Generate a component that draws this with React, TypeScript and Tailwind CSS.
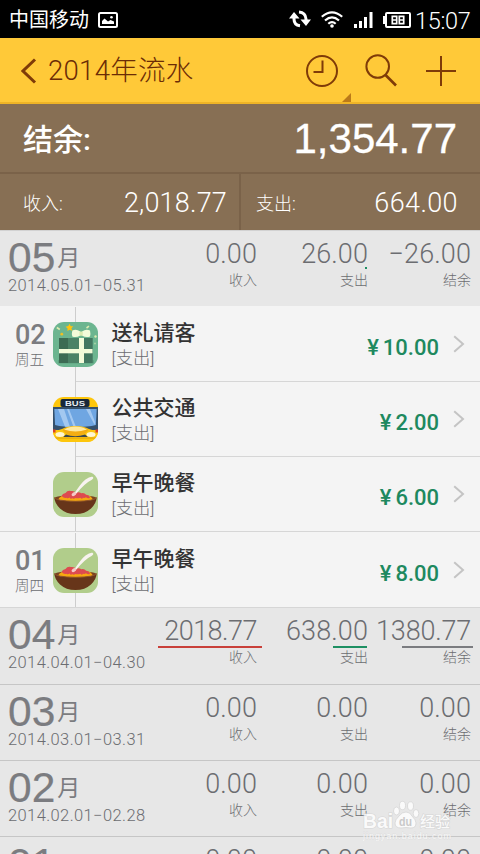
import React from "react";

const CJK = "font-['Roboto','Noto_Sans_CJK_SC',sans-serif]";

function GiftIcon() {
  return (
    <svg width="45" height="45" viewBox="0 0 45 45" className="block">
      <rect width="45" height="45" rx="11" fill="#6cb590" />
      <rect x="5" y="38" width="36" height="3.5" rx="1" fill="#5da37f" />
      <rect x="6" y="16" width="33.5" height="25" fill="#4b8266" />
      <rect x="6" y="16" width="9" height="25" fill="#3c6b53" />
      <rect x="31" y="16" width="8.5" height="25" fill="#437760" />
      <rect x="6" y="27" width="33.5" height="4.3" fill="#f3fbd9" />
      <rect x="26" y="16" width="5" height="25" fill="#f3fbd9" />
      <path d="M19.3 8.5q4-2 8 1v4q-4 2.500-8 1q-.8-3 0-6zM37 8.500q-4-2-8 1v4q4 2.500 8 1q.8-3 0-6z" fill="#f3fbd9" />
      <rect x="26.500" y="9.500" width="3.300" height="4.300" rx="1" fill="#dcebb0" />
      <path d="M16.500 1.800l1.200 2.400 2.600.1-1.900 1.900.8 2.600-2.500-1.100-2.300 1.400.2-2.700-2-1.700 2.700-.6z" fill="#ffc40d" />
      <circle cx="8.800" cy="12.200" r="1.400" fill="#f0bf22" />
      <path d="M3.800 5.500l3 2M33.500 6l2.500-1.800" stroke="#dcebb0" strokeWidth="1.600" />
      <circle cx="42.500" cy="14.500" r="1.200" fill="#dcebb0" />
      <circle cx="42" cy="21.500" r=".9" fill="#aed6a8" />
    </svg>
  );
}

function BusIcon() {
  return (
    <svg width="45" height="45" viewBox="0 0 45 45" className="block">
      <defs>
        <clipPath id="bus"><rect width="45" height="45" rx="11" /></clipPath>
      </defs>
      <g clipPath="url(#bus)">
        <rect width="45" height="45" fill="#fdc60c" />
        <rect y="10" width="45" height="23" fill="#35506b" />
        <path d="M1.300 12h42.400l-.8 16q-8 2-20.400 2t-20.400-2z" fill="#6fa6e2" />
        <path d="M5 12h6l6 18-5-.3zM14 12h2l7 18h-2.500zM33 12h4l5 13-.3 3z" fill="#a3c8f0" />
        <path d="M0 33q4 1 9-1Q14 29 22.500 29T36 32Q41 34 45 33v12H0z" fill="#fdc60c" />
        <path d="M9.500 33Q14 29.500 22.500 29.500T35.500 33Q31 39 22.500 39T9.500 33z" fill="#f4ad12" />
        <path d="M11 32.500Q16 29.500 22.500 29.500T34 32.500Q28 34.500 22.500 34.500T11 32.500z" fill="#ffe9a0" />
        <path d="M13 37.500q9 3.500 19 0l3 2.500H10z" fill="#3a4650" />
        <rect x="7.500" y="2" width="29" height="8" rx="2" fill="#18283a" />
        <text x="12" y="8.500" fontSize="7" fontWeight="700" textLength="20" lengthAdjust="spacingAndGlyphs" fontFamily="Liberation Sans, sans-serif" fill="#e8eef2">BUS</text>
        <ellipse cx="7" cy="37.500" rx="4.500" ry="2.500" fill="#fff6d2" />
        <ellipse cx="38" cy="37.500" rx="4.500" ry="2.500" fill="#fff6d2" />
        <path d="M0 32.500h2.500v3H0zM42.500 32.500H45v3h-2.500z" fill="#d9402b" />
        <rect y="40.500" width="45" height="1.200" fill="#e6a90c" />
      </g>
    </svg>
  );
}

function BowlIcon() {
  return (
    <svg width="45" height="45" viewBox="0 0 45 45" className="block">
      <rect width="45" height="45" rx="11" fill="#b1cd8b" />
      <ellipse cx="22.500" cy="26" rx="21" ry="3" fill="#7b4320" />
      <path d="M5 27.500Q8 23 14 22.500h18q6 1 8 5-8 3-17.500 3T5 27.500z" fill="#f6a810" />
      <path d="M8.500 24q1-2.500 4-3 2-3 5.500-2 3-.5 5 1.500 3-1 5.500.7 3-.7 4.500 1.500 3 0 4 3-2 1.500-4-.4-2 1.500-3 .2-1 2.500-2.500.2-3 1-5 .2-2 1.500-3.500 0-1 2-2.500-.4-1.500 1.500-3 .3-2.500.7-5-1.800z" fill="#dd4b50" />
      <path d="M1.300 25.500Q3 29 22.500 29.300 42 29 43.700 25.500 43.500 31 38 36.500 32 42 22.500 42T7 36.500Q1.500 31 1.300 25.500z" fill="#67351a" />
      <path d="M1.300 25.500Q3 29 22.500 29.300 42 29 43.700 25.500" fill="none" stroke="#8c5029" strokeWidth=".9" />
      <path d="M21 22Q28 11 32.500 7.500 37 4.200 39.500 4.800 41.500 6 38.500 8 32 11 22.500 22.500z" fill="#f8f3f0" />
      <ellipse cx="20.800" cy="22" rx="2.500" ry="1.700" fill="#f4c9c6" transform="rotate(-35 21 22)" />
    </svg>
  );
}

function Chevron() {
  return (
    <svg width="12" height="18" viewBox="0 0 12 18" className="block">
      <path d="M1.200 1.200L10 9l-8.800 7.800" fill="none" stroke="#c4c4c4" strokeWidth="2" />
    </svg>
  );
}

function StatusBar() {
  return (
    <div className="flex h-[38px] items-center bg-black pl-[9px] text-white">
      <span className="mt-[2px] w-[89px] text-[20px] leading-[36px]">中国移动</span>
      <svg width="20" height="16" viewBox="0 0 20 16" className="mt-[2px]">
        <rect x="1" y="1" width="18" height="14" rx="1.500" fill="none" stroke="#fff" strokeWidth="2" />
        <path d="M4 12V9l2.500-2.500 3.500 3 2.500-1.500 3.500 1.500V12z" fill="#fff" />
        <circle cx="13.500" cy="5.300" r="1.300" fill="#fff" />
      </svg>
      <svg width="22" height="18" viewBox="0 0 22 18" className="ml-[171px]">
        <path d="M11 15.800Q5 15 5 9V7M10 2q6.500.5 7 7v2" fill="none" stroke="#fff" strokeWidth="3" />
        <path d="M0 8.500L5 2l5.500 6.500zM11.500 9.500H22L17 16z" fill="#fff" />
      </svg>
      <svg width="22" height="17" viewBox="0 0 22 17" className="ml-[10px]">
        <g fill="none" stroke="#fff" strokeWidth="2.200">
          <path d="M.8 5.800q10.200-9 20.400 0M4 9.500q7-6.300 14 0M7.300 12.800q3.700-3.400 7.400 0" />
        </g>
        <circle cx="11" cy="15" r="1.800" fill="#fff" />
      </svg>
      <svg width="19" height="16" viewBox="0 0 19 16" className="ml-[11px] mt-[2px]">
        <path d="M0 12h3v4H0zM5 9h3v7H5zM10 5h3v11h-3zM15.500 0h3v16h-3z" fill="#fff" />
      </svg>
      <svg width="28" height="16" viewBox="0 0 28 16" className="ml-[10px] mt-[2px]">
        <rect x="3" y="1" width="24" height="14" rx="1" fill="none" stroke="#fff" strokeWidth="2" />
        <rect x="0" y="4" width="2.500" height="8" fill="#fff" />
        <g fill="none" stroke="#fff" strokeWidth="1.700">
          <path d="M9.300 4.300h4.400v7.400H9.300zM9.300 8h4.400M16.300 4.300h4.400v7.400h-4.400zM16.300 8h4.400" />
        </g>
      </svg>
      <span className="ml-[4px] mt-[5px] text-[23.500px] font-light leading-[33px] tracking-[-0.3px]">15:07</span>
    </div>
  );
}

function Header() {
  return (
    <div className="flex h-[66px] items-center border-b-2 border-[#efb427] bg-[#ffc938] pl-[21px]">
      <svg width="16" height="26" viewBox="0 0 16 26" className="mt-[1px]">
        <path d="M14 1.500L2 13l12 11.500" fill="none" stroke="#7f3b08" strokeWidth="3" />
      </svg>
      <h1 className="ml-[11px] w-[246px] whitespace-nowrap pt-[2px] text-[27.500px] font-light leading-[62px] tracking-[0.3px] text-[#6b2c06]">2014年流水</h1>
      <div className="relative flex h-full w-[58px] items-center pl-[12px]">
        <svg width="32" height="32" viewBox="0 0 32 32" className="mt-[2px]">
          <g fill="none" stroke="#7f3b08" strokeWidth="2">
            <circle cx="16" cy="16" r="15" />
            <path d="M16.500 5.500V17H7.500" />
          </g>
        </svg>
        <span className="absolute bottom-0 right-[1px] size-[9px] bg-[#bb7a19] [clip-path:polygon(100%_0,100%_100%,0_100%)]" />
      </div>
      <svg width="32" height="33" viewBox="0 0 32 33" className="ml-[13px]">
        <g fill="none" stroke="#7f3b08" strokeWidth="2">
          <circle cx="12.700" cy="12.500" r="11.300" />
          <path d="M20.500 21L31 31.500" strokeWidth="2.600" />
        </g>
      </svg>
      <svg width="30" height="30" viewBox="0 0 30 30" className="ml-[29px] mt-[2px]">
        <path d="M15 0v30M0 15h30" stroke="#7f3b08" strokeWidth="2" />
      </svg>
    </div>
  );
}

function Summary() {
  return (
    <div className="bg-[#876f54] text-white">
      <div className="flex h-[70px] items-center justify-between border-b-2 border-[#7a6249] px-[23px]">
        <span className="pt-[4px] text-[30px] font-medium leading-[60px]">结余:</span>
        <span className="pt-[2px] font-['Liberation_Sans',sans-serif] text-[42px] leading-[60px] [-webkit-text-stroke:0.3px_white]">1,354.77</span>
      </div>
      <div className="flex h-[56px] items-center">
        <div className="flex h-full w-[241px] items-center justify-between border-r-2 border-[#7a6249] pl-[23px] pr-[12px] pt-[3px]">
          <span className="text-[18px] font-light">收入:</span>
          <span className="text-[27px] font-light tracking-[0.2px]">2,018.77</span>
        </div>
        <div className="flex h-full flex-1 items-center justify-between pl-[15px] pr-[22px] pt-[3px]">
          <span className="text-[18px] font-light">支出:</span>
          <span className="text-[27px] font-light tracking-[0.400px]">664.00</span>
        </div>
      </div>
    </div>
  );
}

type Cell = { value: string; bar?: string; fit?: string };

function Amount({ cell, label, width }: { cell: Cell; label: string; width: string }) {
  return (
    <div className={`flex flex-col items-end text-[#6c6d71] ${width}`}>
      <span className={`h-[29px] text-[27px] font-light leading-[29px] ${cell.fit ?? "tracking-[0.100px]"}`}>{cell.value}</span>
      <span className="flex h-[3px] items-start">
        <span className={cell.bar ?? ""} />
      </span>
      <span className="text-[14px] font-light leading-[16px]">{label}</span>
    </div>
  );
}

type MonthProps = { month: string; range: string; cells: [Cell, Cell, Cell]; edge: string };

function Month({ month, range, cells, edge }: MonthProps) {
  return (
    <section className={`flex shrink-0 bg-[#e7e7e7] pl-[8px] pt-[9px] text-[#7b7c80] ${edge}`}>
      <div className="w-[149px]">
        <div className="flex h-[37px] items-end">
          <span className="mb-[1px] font-['Liberation_Sans',sans-serif] text-[42.500px] leading-[36px] [-webkit-text-stroke:0.2px_#7b7c80]">{month}</span>
          <span className="mb-[3px] ml-[2px] text-[23px] leading-[30px]">月</span>
        </div>
        <div className="whitespace-nowrap text-[16.500px] font-light leading-[18px] tracking-[0.400px] text-[#6c6d71]">{range}</div>
      </div>
      <Amount cell={cells[0]} label="收入" width="w-[100px]" />
      <Amount cell={cells[1]} label="支出" width="w-[111px]" />
      <Amount cell={cells[2]} label="结余" width="w-[103px]" />
    </section>
  );
}

type EntryProps = {
  day?: string;
  week?: string;
  icon: React.ReactNode;
  title: string;
  price: string;
  size: string;
  last?: boolean;
};

function Entry({ day, week, icon, title, price, size, last }: EntryProps) {
  return (
    <div className={`flex bg-[#f4f4f4] ${size} ${last ? "border-b border-[#d6d6d6]" : ""}`}>
      <div className="w-[76px] shrink-0 border-r border-[#cdcdcd] pl-[15px] pt-[15px] text-[#7b7c80]">
        <div className="h-[26px] text-[27px] font-medium leading-[26px]">{day}</div>
        <div className="mt-[3px] text-[14.500px] font-light leading-[20px] text-[#6c6d71]">{week}</div>
      </div>
      <div className={`flex flex-1 ${last ? "" : "border-b border-[#d6d6d6]"}`}>
        <div className="relative ml-[-23px] mt-[15px]">{icon}</div>
        <div className="ml-[13.500px] mt-[12px] flex-1">
          <div className="text-[21px] font-medium leading-[28px] text-[#333]">{title}</div>
          <div className="text-[17.300px] font-light leading-[23px] text-[#6c6d71]">[支出]</div>
        </div>
        <div className="mt-[27px] flex h-[26px] items-center gap-[4px] text-[22px] font-medium text-[#1e895f]">
          <span>¥</span>
          <span>{price}</span>
        </div>
        <div className="ml-[14px] mr-[15px] mt-[28px]"><Chevron /></div>
      </div>
    </div>
  );
}

function BrandMark() {
  return (
    <div className="absolute left-[363px] top-[800px] w-[90px] opacity-80">
      <svg width="90" height="42" viewBox="0 0 90 42">
        <g stroke="#d2d2d2" strokeWidth=".8" fill="#fff">
          <ellipse cx="33.500" cy="11" rx="3" ry="4" />
          <ellipse cx="39.500" cy="5.500" rx="3" ry="4.200" />
          <ellipse cx="47.500" cy="6" rx="3" ry="4.200" />
          <ellipse cx="53" cy="13.500" rx="2.800" ry="4" />
          <path d="M43 12q4 0 6 4 4 4 4 7 0 5-5 5-5-1-10 0-6 0-6-5 0-3 4-7 3-4 7-4z" />
        </g>
        <g fontFamily="Liberation Sans, Noto Sans CJK SC, sans-serif" fill="#fff" stroke="#d2d2d2" strokeWidth="1.200" paintOrder="stroke">
          <text x="0" y="28" fontSize="19.500" fontWeight="700" textLength="30" lengthAdjust="spacingAndGlyphs">Bai</text>
          <text x="36" y="26" fontSize="12" fontWeight="700" textLength="13" lengthAdjust="spacingAndGlyphs" fill="#c2c2c2" strokeWidth="0">du</text>
          <text x="57" y="26.500" fontSize="15" fontWeight="500">经验</text>
          <text x="0" y="38.500" fontSize="9" textLength="88" strokeWidth=".5">jingyan.baidu.com</text>
        </g>
      </svg>
    </div>
  );
}

const zero: Cell = { value: "0.00" };

export default function App() {
  return (
    <main className={`relative h-[854px] w-[480px] overflow-hidden bg-[#e7e7e7] ${CJK}`}>
      <StatusBar />
      <Header />
      <Summary />
      <Month
        month="05"
        range="2014.05.01−05.31"
        cells={[zero, { value: "26.00", bar: "-mt-[2px] mr-[1px] block h-[2px] w-[2px] bg-[#1e9063]" }, { value: "−26.00" }]}
        edge="h-[76px] border-t border-[#d2d2d2]"
      />
      <Entry day="02" week="周五" icon={<GiftIcon />} title="送礼请客" price="10.00" size="h-[76px] pt-px" />
      <Entry icon={<BusIcon />} title="公共交通" price="2.00" size="h-[75px]" />
      <Entry icon={<BowlIcon />} title="早午晚餐" price="6.00" size="h-[75px]" last />
      <Entry day="01" week="周四" icon={<BowlIcon />} title="早午晚餐" price="8.00" size="h-[76px] pt-px" last />
      <Month
        month="04"
        range="2014.04.01−04.30"
        cells={[
          { value: "2018.77", bar: "-mr-[5px] h-[2px] w-[104px] bg-[#c9403a]", fit: "tracking-[-0.5px]" },
          { value: "638.00", bar: "mr-[1px] h-[2px] w-[34px] bg-[#1e9063]" },
          { value: "1380.77", bar: "-mr-[2px] h-[2px] w-[71px] bg-[#7b7c80]", fit: "tracking-[-0.2px]" },
        ]}
        edge="h-[77px] border-b border-[#c6c6c6]"
      />
      <Month month="03" range="2014.03.01−03.31" cells={[zero, zero, zero]} edge="h-[76px] border-b border-[#c6c6c6]" />
      <Month month="02" range="2014.02.01−02.28" cells={[zero, zero, zero]} edge="h-[76px] border-b border-[#c6c6c6]" />
      <Month month="01" range="2014.01.01−01.31" cells={[zero, zero, zero]} edge="h-[76px] border-b border-[#c6c6c6]" />
      <BrandMark />
    </main>
  );
}
